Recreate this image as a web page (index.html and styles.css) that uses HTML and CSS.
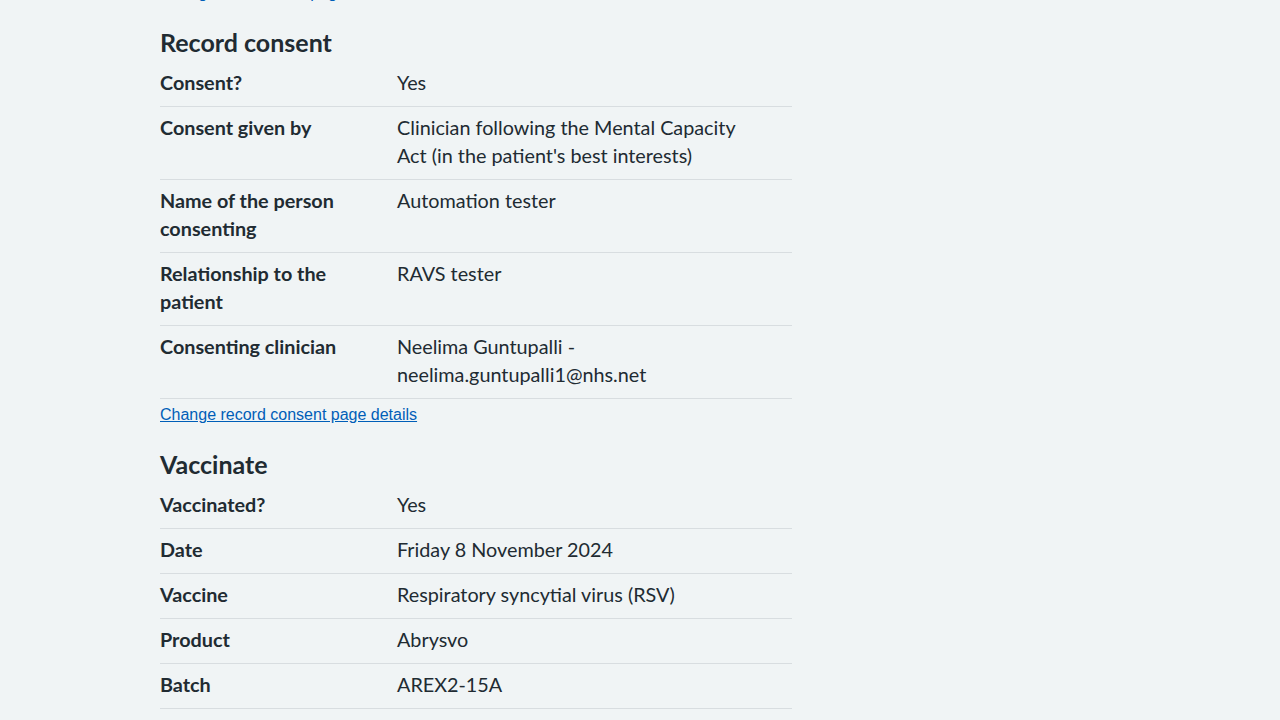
FILE: index.html
```html
<!DOCTYPE html>
<html lang="en">
<head>
<meta charset="utf-8">
<title>Check and confirm</title>
<link rel="stylesheet" href="styles.css">
</head>
<body>
<main class="page">
  <a class="change-link top-link" href="#">Change assessment page details</a>

  <h2 class="section-title first-title">Record consent</h2>
  <dl class="summary">
    <div class="row"><dt class="key">Consent?</dt><dd class="value">Yes</dd></div>
    <div class="row"><dt class="key">Consent given by</dt><dd class="value">Clinician following the Mental Capacity Act (in the patient's best interests)</dd></div>
    <div class="row"><dt class="key">Name of the person consenting</dt><dd class="value">Automation tester</dd></div>
    <div class="row"><dt class="key">Relationship to the patient</dt><dd class="value">RAVS tester</dd></div>
    <div class="row"><dt class="key">Consenting clinician</dt><dd class="value">Neelima Guntupalli - neelima.guntupalli1@nhs.net</dd></div>
  </dl>
  <a class="change-link" href="#">Change record consent page details</a>

  <h2 class="section-title">Vaccinate</h2>
  <dl class="summary">
    <div class="row"><dt class="key">Vaccinated?</dt><dd class="value">Yes</dd></div>
    <div class="row"><dt class="key">Date</dt><dd class="value">Friday 8 November 2024</dd></div>
    <div class="row"><dt class="key">Vaccine</dt><dd class="value">Respiratory syncytial virus (RSV)</dd></div>
    <div class="row"><dt class="key">Product</dt><dd class="value">Abrysvo</dd></div>
    <div class="row"><dt class="key">Batch</dt><dd class="value">AREX2-15A</dd></div>
  </dl>
</main>
</body>
</html>
```

FILE: styles.css
```css
html, body {
  margin: 0;
  padding: 0;
  background: #f0f4f5;
}

body {
  color: #212b32;
  font-family: "Lato", "Noto Sans", sans-serif;
  overflow: hidden;
}

.page {
  width: 632px;
  margin-left: 160px;
  padding-top: 1px;
  margin-top: -15px;
  display: flex;
  flex-direction: column;
  align-items: flex-start;
}

.change-link {
  font-family: "Liberation Sans", Arial, sans-serif;
  font-size: 16px;
  line-height: 18px;
  color: #005eb8;
  text-decoration: underline;
  margin-top: 7px;
}

.top-link {
  margin-top: -2px;
}

.section-title {
  font-size: 25px;
  line-height: 32px;
  font-weight: 700;
  margin: 24px 0 4px 0;
}

.first-title {
  margin-top: 24px;
  margin-bottom: 4px;
}

.summary {
  margin: 0;
  width: 100%;
}

.row {
  display: grid;
  grid-template-columns: 237px 1fr;
  border-bottom: 1px solid #d8dde0;
}

.key, .value {
  margin: 0;
  padding: 6px 24px 10px 0;
  font-size: 19.8px;
  line-height: 28px;
}

.key {
  font-weight: 700;
}
```
